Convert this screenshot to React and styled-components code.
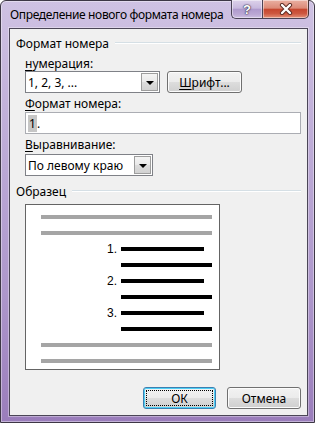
import React from 'react';
import styled, { createGlobalStyle } from 'styled-components';

const Global = createGlobalStyle`
  html, body {
    margin: 0;
    padding: 0;
    background: #fff;
  }
  body {
    font-family: "Noto Sans", "Liberation Sans", sans-serif;
    font-size: 12px;
    color: #000;
  }
`;

const Window = styled.div`
  width: 315px;
  height: 423px;
  box-sizing: border-box;
  border: 1px solid #3d3745;
  border-radius: 6px 6px 0 0;
  background: linear-gradient(180deg, #cfc2e3 0%, #c2b1da 25%, #ad96cb 70%, #9a7dbb 100%);
  box-shadow: inset 0 0 0 1px rgba(255, 255, 255, 0.4);
  display: flex;
  flex-direction: column;
  padding: 0 6px 6px 8px;
`;

const TitleBar = styled.div`
  height: 27px;
  display: flex;
  align-items: flex-start;
  flex-shrink: 0;
`;

const Title = styled.div`
  flex: 1;
  padding: 5px 0 0 1px;
  line-height: 17px;
  font-size: 12px;
  letter-spacing: -0.35px;
  color: #000;
  white-space: nowrap;
`;

const Controls = styled.div`
  display: flex;
  margin-top: -1px;
  margin-right: -1px;
`;

const CaptionButton = styled.div`
  height: 19px;
  box-sizing: border-box;
  border: 1px solid #4a4356;
  border-top: none;
  display: flex;
  align-items: center;
  justify-content: center;
  width: ${(p) => (p.$close ? '47px' : '31px')};
  border-radius: ${(p) => (p.$close ? '0 0 5px 0' : '0 0 0 5px')};
  border-right: ${(p) => (p.$close ? '1px solid #4a3636' : 'none')};
  background: ${(p) =>
    p.$close
      ? 'linear-gradient(180deg, #eab0a2 0%, #dc8a77 45%, #c6472f 52%, #cd5840 75%, #e49079 100%)'
      : 'linear-gradient(180deg, #ddd2ea 0%, #c8b9de 45%, #af9acd 52%, #bba8d4 80%, #cdbee2 100%)'};
  box-shadow: inset 0 0 0 1px rgba(255, 255, 255, 0.45);
`;

const HelpMark = styled.span`
  font-family: "Liberation Sans", sans-serif;
  font-weight: bold;
  font-size: 13px;
  line-height: 13px;
  color: #fff;
  text-shadow: 0 0 1px #3d3550, 0 0 1px #3d3550, 0 0 2px #3d3550;
`;

const Client = styled.div`
  flex: 1;
  border: 1px solid #4b4657;
  background: #f0f0f0;
  display: flex;
  flex-direction: column;
  box-shadow: 0 0 0 1px rgba(255, 255, 255, 0.35);
`;

const SectionHeader = styled.div`
  display: flex;
  align-items: center;
  height: 15px;
  line-height: 15px;
  padding: 0 6px;
  margin-top: ${(p) => p.$top}px;

  &::after {
    content: '';
    flex: 1;
    height: 1px;
    margin: -2px 0 0 6px;
    background: #d5dfe5;
    box-shadow: 0 1px 0 #fff;
  }
`;

const Body = styled.div`
  padding: 0 6px 0 15px;
  display: flex;
  flex-direction: column;
  align-items: flex-start;
`;

const Label = styled.div`
  height: 15px;
  line-height: 15px;
  margin-top: ${(p) => p.$top}px;
  margin-bottom: ${(p) => p.$bottom || 0}px;
`;

const Key = styled.span`
  text-decoration: underline;
  text-underline-offset: 2px;
`;

const Row = styled.div`
  display: flex;
  align-items: center;
  gap: 7px;
`;

const Combo = styled.div`
  width: ${(p) => p.$width}px;
  height: 22px;
  box-sizing: border-box;
  border: 1px solid #7f8187;
  background: #fff;
  display: flex;
  align-items: center;
  padding-left: 2px;
  padding-right: 1px;
`;

const ComboText = styled.div`
  flex: 1;
  white-space: nowrap;
`;

const ComboButton = styled.div`
  width: 17px;
  height: 18px;
  box-sizing: border-box;
  border: 1px solid #9d9d9d;
  background: linear-gradient(180deg, #f4f4f4 0%, #e9e9e9 50%, #dcdcdc 51%, #d2d2d2 100%);
  display: flex;
  align-items: center;
  justify-content: center;

  &::before {
    content: '';
    border-left: 4px solid transparent;
    border-right: 4px solid transparent;
    border-top: 4px solid #000;
    margin-top: 1px;
  }
`;

const Button = styled.div`
  width: ${(p) => p.$width}px;
  height: 22px;
  box-sizing: border-box;
  border: 1px solid ${(p) => (p.$default ? '#3c7fb1' : '#707070')};
  border-radius: 3px;
  background: linear-gradient(180deg, #f2f2f2 0%, #ebebeb 50%, #dddddd 51%, #cfcfcf 100%);
  box-shadow: inset 0 0 0 1px ${(p) => (p.$default ? '#4fd0f6' : '#fcfcfc')};
  display: flex;
  align-items: center;
  justify-content: center;
  padding: 2px;
`;

const ButtonInner = styled.div`
  flex: 1;
  align-self: stretch;
  display: flex;
  align-items: center;
  justify-content: center;
  outline: ${(p) => (p.$focus ? '1px dotted #000' : 'none')};
  outline-offset: -1px;
`;

const TextBox = styled.div`
  width: 276px;
  height: 22px;
  box-sizing: border-box;
  border: 1px solid #abadb3;
  background: #fff;
  display: flex;
  align-items: center;
  padding-left: 2px;
`;

const Selected = styled.span`
  background: #c6c6c6;
  padding: 0 1px;
`;

const Preview = styled.div`
  width: 195px;
  height: 166px;
  box-sizing: border-box;
  margin-top: 5px;
  border: 1px solid #646464;
  background: #fff;
  padding: 4px 6px 0 15px;
  display: flex;
  flex-direction: column;
`;

const Line = styled.div`
  height: 16px;
  display: flex;
  align-items: center;
`;

const Num = styled.div`
  width: 80px;
  box-sizing: border-box;
  padding-right: 4px;
  text-align: right;
  font-family: "Liberation Sans", sans-serif;
  font-size: 12px;
  line-height: 16px;
`;

const Bar = styled.div`
  height: 4px;
  width: ${(p) => p.$width}px;
  background: ${(p) => (p.$gray ? '#a5a5a5' : '#000')};
`;

const Footer = styled.div`
  display: flex;
  justify-content: flex-end;
  gap: 11px;
  margin-top: 17px;
  padding-right: 6px;
`;

function CloseGlyph() {
  return (
    <svg width="14" height="12" viewBox="0 0 14 12">
      <path d="M3 2 L11 10 M11 2 L3 10" stroke="#5a2a22" strokeWidth="4.2" strokeLinecap="round" />
      <path d="M3 2 L11 10 M11 2 L3 10" stroke="#fff" strokeWidth="2.4" strokeLinecap="round" />
    </svg>
  );
}

const sample = [
  { gray: true },
  { gray: true },
  { num: '1.', width: 83 },
  { width: 91 },
  { num: '2.', width: 83 },
  { width: 91 },
  { num: '3.', width: 83 },
  { width: 91 },
  { gray: true },
  { gray: true },
];

export default function App() {
  return (
    <>
      <Global />
      <Window>
        <TitleBar>
          <Title>Определение нового формата номера</Title>
          <Controls>
            <CaptionButton>
              <HelpMark>?</HelpMark>
            </CaptionButton>
            <CaptionButton $close>
              <CloseGlyph />
            </CaptionButton>
          </Controls>
        </TitleBar>
        <Client>
          <SectionHeader $top={7}>Формат номера</SectionHeader>
          <Body>
            <Label $top={5}>
              <Key>н</Key>умерация:
            </Label>
            <Row>
              <Combo $width={135}>
                <ComboText>1, 2, 3, ...</ComboText>
                <ComboButton />
              </Combo>
              <Button $width={75}>
                <ButtonInner>
                  <span>
                    <Key>Ш</Key>рифт...
                  </span>
                </ButtonInner>
              </Button>
            </Row>
            <Label $top={3} $bottom={1}>
              <Key>Ф</Key>ормат номера:
            </Label>
            <TextBox>
              <Selected>1</Selected>.
            </TextBox>
            <Label $top={3} $bottom={2}>
              <Key>В</Key>ыравнивание:
            </Label>
            <Combo $width={128}>
              <ComboText>По левому краю</ComboText>
              <ComboButton />
            </Combo>
          </Body>
          <SectionHeader $top={8}>Образец</SectionHeader>
          <Body>
            <Preview>
              {sample.map((row, i) => (
                <Line key={i}>
                  {row.gray ? (
                    <Bar $gray $width={171} />
                  ) : (
                    <>
                      <Num>{row.num}</Num>
                      <Bar $width={row.width} />
                    </>
                  )}
                </Line>
              ))}
            </Preview>
          </Body>
          <Footer>
            <Button $width={73} $default>
              <ButtonInner $focus>ОК</ButtonInner>
            </Button>
            <Button $width={74}>
              <ButtonInner>Отмена</ButtonInner>
            </Button>
          </Footer>
        </Client>
      </Window>
    </>
  );
}
